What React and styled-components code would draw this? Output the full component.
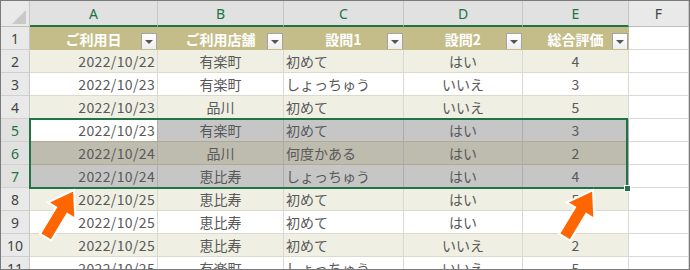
import React from 'react';
import styled, { createGlobalStyle, css } from 'styled-components';

const Global = createGlobalStyle`
  html, body { margin: 0; padding: 0; background: #fff; }
  body { font-family: "Noto Sans CJK JP", "Noto Sans", sans-serif; }
`;

const GREEN = '#217346';

const Frame = styled.div`
  position: relative;
  width: 690px;
  height: 270px;
  box-sizing: border-box;
  border: 1px solid #7a7a7a;
  overflow: hidden;
  background: #fff;
`;

const Sheet = styled.div`
  display: grid;
  grid-template-columns: 29px 128px 126px 120px 119px 106px 1fr;
  grid-template-rows: 26px repeat(11, 23px);
`;

const Corner = styled.div`
  box-sizing: border-box;
  background: #e9e9e9;
  border-right: 1px solid #c6c6c6;
  border-bottom: 1px solid #bdbdbd;
  display: flex;
  align-items: flex-end;
  justify-content: flex-end;
  padding: 0 3px 2px 0;
`;

const ColHead = styled.div`
  box-sizing: border-box;
  display: flex;
  align-items: center;
  justify-content: center;
  font-family: "Noto Sans", "Noto Sans CJK JP", sans-serif;
  font-size: 14px;
  background: ${p => (p.$sel ? '#e1e1e1' : '#e9e9e9')};
  color: ${p => (p.$sel ? GREEN : '#444')};
  border-right: 1px solid #c6c6c6;
  border-bottom: ${p => (p.$sel ? `2px solid ${GREEN}` : '1px solid #bdbdbd')};
  padding-top: ${p => (p.$sel ? '1px' : '0')};
`;

const RowHead = styled.div`
  box-sizing: border-box;
  display: flex;
  align-items: center;
  justify-content: center;
  font-family: "Noto Sans", sans-serif;
  font-size: 14px;
  background: ${p => (p.$sel ? '#e1e1e1' : '#e9e9e9')};
  color: ${p => (p.$sel ? GREEN : '#444')};
  border-right: 1px solid #c6c6c6;
  border-bottom: 1px solid #d0d0d0;
`;

const bgFor = p => {
  if (p.$kind === 'head') return '#c4bd8a';
  if (p.$active) return '#ffffff';
  if (p.$sel) return p.$kind === 'band' ? '#bdbcae' : '#c6c6c6';
  if (p.$kind === 'band') return '#efefe3';
  return '#ffffff';
};

const Cell = styled.div`
  box-sizing: border-box;
  display: flex;
  align-items: center;
  white-space: nowrap;
  overflow: hidden;
  font-size: 14px;
  line-height: 22px;
  color: #595959;
  padding: 0 2px;
  letter-spacing: ${p => (p.$wide ? '0.35px' : '0')};
  background: ${bgFor};
  justify-content: ${p =>
    p.$align === 'right' ? 'flex-end' : p.$align === 'left' ? 'flex-start' : 'center'};
  border-right: 1px solid
    ${p => (p.$kind === 'head' ? '#c4bd8a' : p.$sel ? '#acacac' : '#d9d9d2')};
  border-bottom: 1px solid
    ${p => (p.$kind === 'head' ? '#c4bd8a' : p.$sel ? '#aeab8f' : '#dbdbcd')};
  ${p =>
    p.$blank &&
    css`
      background: #fff;
      border-right: 1px solid #dadada;
      border-bottom: 1px solid #dadada;
    `}
`;

const HeadCell = styled(Cell)`
  display: grid;
  grid-template-columns: 16px 1fr 16px;
  align-items: end;
  padding: 0 0 1px 0;
  color: #fff;
  font-weight: 700;
`;

const HeadLabel = styled.span`
  text-align: center;
  align-self: center;
  padding-top: 1px;
`;

const FilterBtn = styled.span`
  box-sizing: border-box;
  width: 16px;
  height: 17px;
  border: 1px solid #a3a3a3;
  background: linear-gradient(#ffffff, #eeeeee);
  display: flex;
  align-items: center;
  justify-content: center;
  &::after {
    content: '';
    width: 0;
    height: 0;
    border-left: 4px solid transparent;
    border-right: 4px solid transparent;
    border-top: 4px solid #555;
    margin-top: 1px;
  }
`;

const Selection = styled.div`
  position: absolute;
  left: 28px;
  top: 117px;
  width: 599px;
  height: 71px;
  box-sizing: border-box;
  border: 2px solid ${GREEN};
  pointer-events: none;
`;

const FillHandle = styled.div`
  position: absolute;
  right: -5px;
  bottom: -5px;
  width: 7px;
  height: 7px;
  box-sizing: border-box;
  background: ${GREEN};
  border: 1px solid #fff;
`;

const Overlay = styled.svg`
  position: absolute;
  left: 0;
  top: 0;
  pointer-events: none;
`;

const cols = ['A', 'B', 'C', 'D', 'E'];
const headers = ['ご利用日', 'ご利用店舗', '設問1', '設問2', '総合評価'];
const aligns = ['right', 'center', 'left', 'center', 'center'];

const rows = [
  ['2022/10/22', '有楽町', '初めて', 'はい', '4'],
  ['2022/10/23', '有楽町', 'しょっちゅう', 'いいえ', '3'],
  ['2022/10/23', '品川', '初めて', 'いいえ', '5'],
  ['2022/10/23', '有楽町', '初めて', 'はい', '3'],
  ['2022/10/24', '品川', '何度かある', 'はい', '2'],
  ['2022/10/24', '恵比寿', 'しょっちゅう', 'はい', '4'],
  ['2022/10/25', '恵比寿', '初めて', 'はい', '5'],
  ['2022/10/25', '恵比寿', '初めて', 'はい', '4'],
  ['2022/10/25', '恵比寿', '初めて', 'いいえ', '2'],
  ['2022/10/25', '有楽町', 'しょっちゅう', 'いいえ', '5'],
];

const ARROW = '0,0 16,24 6.5,24 6.5,55 -6.5,55 -6.5,24 -16,24';

function Arrow({ x, y }) {
  return (
    <g transform={`translate(${x} ${y}) rotate(31)`}>
      <polygon
        points={ARROW}
        fill="#ff6600"
        stroke="#ffffff"
        strokeWidth="2"
        strokeLinejoin="miter"
      />
    </g>
  );
}

export default function App() {
  return (
    <>
      <Global />
      <Frame>
        <Sheet>
          <Corner>
            <svg width="14" height="14" viewBox="0 0 14 14">
              <polygon points="14,0 14,14 0,14" fill="#c8c8c8" />
            </svg>
          </Corner>
          {cols.map(c => (
            <ColHead key={c} $sel>
              {c}
            </ColHead>
          ))}
          <ColHead>F</ColHead>

          <RowHead>1</RowHead>
          {headers.map(h => (
            <HeadCell key={h} $kind="head">
              <span />
              <HeadLabel>{h}</HeadLabel>
              <FilterBtn />
            </HeadCell>
          ))}
          <Cell $blank />

          {rows.map((r, i) => {
            const rowNo = i + 2;
            const sel = rowNo >= 5 && rowNo <= 7;
            const kind = rowNo % 2 === 0 ? 'band' : 'plain';
            return (
              <React.Fragment key={rowNo}>
                <RowHead $sel={sel}>{rowNo}</RowHead>
                {r.map((v, j) => (
                  <Cell
                    key={j}
                    $kind={kind}
                    $sel={sel}
                    $active={sel && rowNo === 5 && j === 0}
                    $align={aligns[j]}
                    $wide={j === 0}
                  >
                    {v}
                  </Cell>
                ))}
                <Cell $blank />
              </React.Fragment>
            );
          })}
        </Sheet>

        <Selection>
          <FillHandle />
        </Selection>

        <Overlay width="690" height="270">
          <Arrow x={73} y={189} />
          <Arrow x={592} y={189} />
        </Overlay>
      </Frame>
    </>
  );
}
